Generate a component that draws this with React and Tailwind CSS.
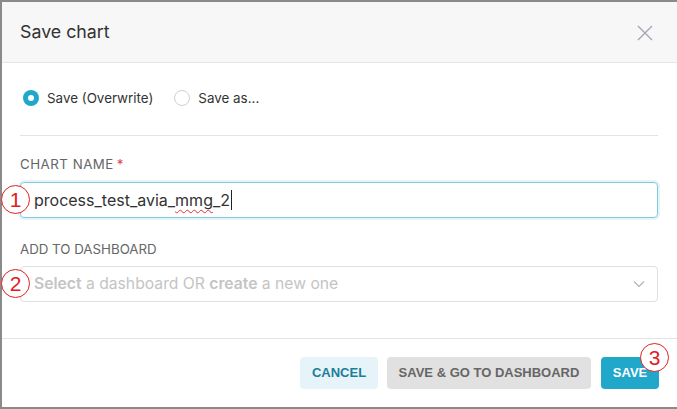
import React from 'react';

const Marker = ({ n, className }) => (
  <div
    className={`absolute w-[29px] h-[29px] rounded-full border border-[#e0201e] bg-white flex items-center justify-center text-[21px] leading-none text-[#e0201e] font-['Liberation_Sans',sans-serif] ${className}`}
  >
    {n}
  </div>
);

export default function App() {
  return (
    <div className="w-[677px] h-[409px] bg-[#8a8a8a] pt-[2px] pl-[2px] pb-[2px] overflow-hidden font-['Inter',sans-serif]">
      <div className="h-full bg-white flex flex-col">
        {/* header */}
        <div className="h-[61px] shrink-0 bg-[#f7f7f7] border-b border-[#e6e6e6] flex items-center justify-between pl-[18px] pr-[23px]">
          <h2 className="text-[17.8px] text-[#323232]">Save chart</h2>
          <svg width="18" height="18" viewBox="0 0 18 18" className="mt-[1px]">
            <path d="M2 2 L16 16 M16 2 L2 16" stroke="#a3a6b4" strokeWidth="1.4" fill="none" />
          </svg>
        </div>

        {/* body */}
        <div className="pt-[25px] pb-[36px] pl-[18px] pr-[19px]">
          <div className="h-5 flex items-center text-[13.4px] text-[#333]">
            <span className="ml-[3px] w-4 h-4 rounded-full bg-[#20a7c9] flex items-center justify-center">
              <span className="w-[6px] h-[6px] rounded-full bg-white" />
            </span>
            <span className="ml-2">Save (Overwrite)</span>
            <span className="ml-[21px] w-4 h-4 rounded-full border border-[#d0d0d0] bg-white" />
            <span className="ml-2">Save as...</span>
          </div>

          <div className="mt-[27px] h-px bg-[#e3e3e3]" />

          <div className="mt-[21px] h-4 flex items-center text-[13.3px] text-[#666] uppercase tracking-[0.5px]">
            Chart name<span className="ml-[3px] text-[#e04355]">*</span>
          </div>
          <div className="relative mt-[9px]">
            <div className="h-9 rounded-[4px] border border-[#7ccbe0] shadow-[0_0_0_2px_rgba(32,167,201,0.12)] flex items-center pl-[13px] text-[16px] text-[#323232]">
              process_test_avia_
              <span className="underline decoration-wavy decoration-[#e53030] decoration-1 underline-offset-[3px]">mmg</span>
              _2
              <span className="ml-[1px] w-px h-[20px] bg-[#222]" />
            </div>
            <Marker n="1" className="left-[-19px] top-[3px]" />
          </div>

          <div className="mt-[24px] h-4 flex items-center text-[13.3px] text-[#666] uppercase">
            Add to dashboard
          </div>
          <div className="relative mt-[8px]">
            <div className="h-9 rounded-[4px] border border-[#e0e0e0] flex items-center justify-between pl-[13px] pr-[12px] text-[15.7px] text-[#c4c4c4]">
              <span>
                <b className="font-semibold">Select</b> a dashboard OR <b className="font-semibold">create</b> a new one
              </span>
              <svg width="12" height="8" viewBox="0 0 12 8">
                <path d="M1 1.5 L6 6.5 L11 1.5" stroke="#b0b0b0" strokeWidth="1.1" fill="none" />
              </svg>
            </div>
            <Marker n="2" className="left-[-19px] top-[3px]" />
          </div>
        </div>

        {/* footer */}
        <div className="border-t border-[#e3e3e3] pt-[18px] pr-[18px] flex justify-end gap-[9px] text-[13px] font-bold font-['Liberation_Sans',sans-serif]">
          <button className="w-[78px] h-8 rounded-[4px] bg-[#e6f4fa] text-[#1c7e98]">CANCEL</button>
          <button className="w-[204px] h-8 rounded-[4px] bg-[#e1e1e1] text-[#666]">SAVE &amp; GO TO DASHBOARD</button>
          <div className="relative ml-px">
            <button className="w-[58px] h-8 rounded-[4px] bg-[#20a7c9] text-white">SAVE</button>
            <Marker n="3" className="left-[39px] top-[-14px] font-normal" />
          </div>
        </div>
      </div>
    </div>
  );
}
